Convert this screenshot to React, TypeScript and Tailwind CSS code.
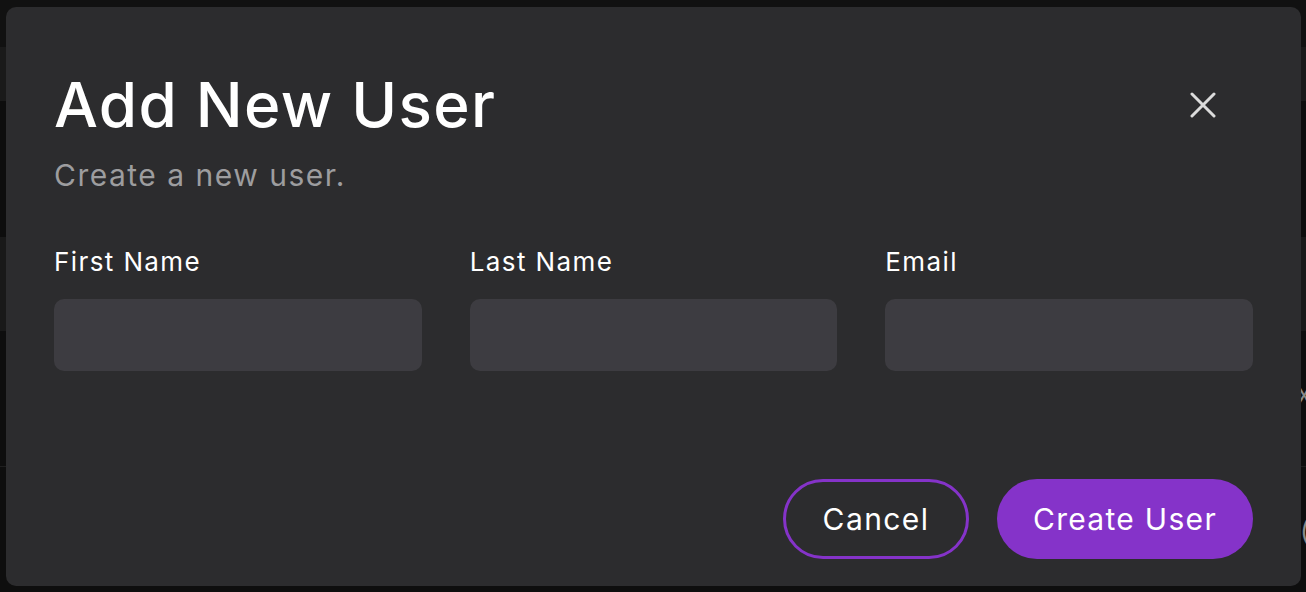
import React from "react";

const font = { fontFamily: "Inter, 'Open Sans', sans-serif" };

function Field({ label }: { label: string }) {
  return (
    <div className="flex flex-col">
      <label className="text-[26px] leading-[30px] font-normal text-white tracking-[1.4px]">{label}</label>
      <div className="mt-[22px] h-[72px] rounded-[10px] bg-[#3d3c41]" />
    </div>
  );
}

export default function App() {
  return (
    <div className="relative w-[1306px] h-[592px] overflow-hidden bg-[#0e0e0e]" style={font}>
      <div className="flex flex-col">
        <div className="h-[47px] bg-[#111111]" />
        <div className="h-[54px] bg-[#1a1a1a]" />
        <div className="h-[136px] bg-[#0d0d0d]" />
        <div className="h-[94px] bg-[#191919]" />
        <div className="h-[135px] bg-[#0e0e0e]" />
        <div className="h-px bg-[#1f1f1f]" />
        <div className="h-[125px] bg-[#0e0e0e]" />
      </div>
      <span className="absolute left-[1297px] top-[379px] text-[26px] leading-[30px] text-[#8a8a8a]">x</span>
      <span className="absolute left-[1300px] top-[516px] text-[26px] leading-[30px] text-[#8a8a8a]">(</span>

      <div className="absolute left-[6px] top-[7px] w-[1295px] h-[579px] rounded-[10px] bg-[#2c2c2e] px-[48px] pt-[66px] flex flex-col">
        <div className="flex items-start justify-between">
          <div className="flex flex-col">
            <h1 className="text-[62px] leading-[64px] font-medium text-white tracking-[1.3px]">Add New User</h1>
            <p className="mt-[21px] text-[30px] leading-[34px] text-[#9d9d9f] tracking-[1.5px]">Create a new user.</p>
          </div>
          <button className="mt-[19px] mr-[37px] w-[26px] h-[26px] flex items-center justify-center">
            <svg width="26" height="26" viewBox="0 0 26 26" fill="none" stroke="#dcdcdc" strokeWidth="3" strokeLinecap="round">
              <path d="M2 2 L24 24 M24 2 L2 24" />
            </svg>
          </button>
        </div>

        <div className="mt-[55px] grid grid-cols-3 gap-[48px]">
          <Field label="First Name" />
          <Field label="Last Name" />
          <Field label="Email" />
        </div>

        <div className="mt-[108px] flex justify-end gap-[28px]">
          <button className="h-[80px] w-[186px] rounded-full border-[3px] border-[#8533c9] text-white text-[30px] font-normal tracking-[1.4px]">
            Cancel
          </button>
          <button className="h-[80px] w-[256px] rounded-full bg-[#8533c9] text-white text-[30px] font-normal tracking-[1.3px]">
            Create User
          </button>
        </div>
      </div>
    </div>
  );
}
